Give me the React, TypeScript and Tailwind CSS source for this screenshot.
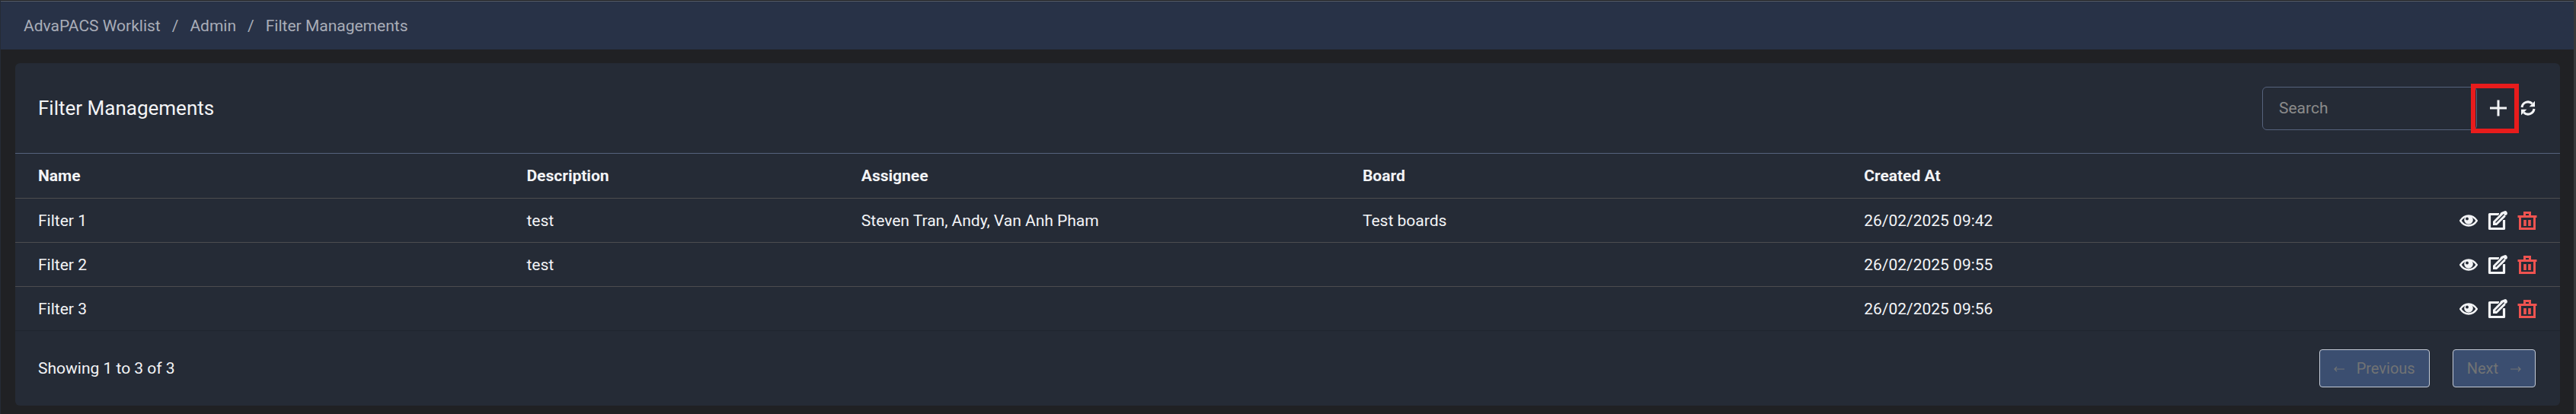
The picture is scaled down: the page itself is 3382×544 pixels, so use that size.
import { useState } from 'react'

type Filter = {
  id: number
  name: string
  description: string
  assignee: string
  board: string
  createdAt: string
}

const filters: Filter[] = [
  { id: 1, name: 'Filter 1', description: 'test', assignee: 'Steven Tran, Andy, Van Anh Pham', board: 'Test boards', createdAt: '26/02/2025 09:42' },
  { id: 2, name: 'Filter 2', description: 'test', assignee: '', board: '', createdAt: '26/02/2025 09:55' },
  { id: 3, name: 'Filter 3', description: '', assignee: '', board: '', createdAt: '26/02/2025 09:56' },
]

function PlusIcon() {
  return (
    <svg viewBox="0 0 24 24" className="size-6" stroke="currentColor" strokeWidth="3" fill="none">
      <path d="M12 1.500v21M1 12h22" />
    </svg>
  )
}

function RefreshIcon() {
  return (
    <svg viewBox="0 0 20 20" className="size-5" fill="none">
      <path d="M2 9A8 8 0 0 1 15.500 4.200M18 11A8 8 0 0 1 4.500 15.800" stroke="currentColor" strokeWidth="3" />
      <path d="M19 .8v7.400h-7.400zM1 19.200v-7.400h7.400z" fill="currentColor" />
    </svg>
  )
}

function EyeIcon() {
  return (
    <svg viewBox="0 0 24 24" className="size-6" fill="none">
      <path d="M1.200 12Q5.500 5.500 12 5.500T22.800 12Q18.500 18.500 12 18.500T1.200 12Z" stroke="currentColor" strokeWidth="2.400" />
      <circle cx="12" cy="11" r="5.800" fill="currentColor" />
      <circle cx="10" cy="9.500" r="1.900" className="fill-[#252b36]" />
    </svg>
  )
}

function EditIcon() {
  return (
    <svg viewBox="0 0 26 26" className="size-[26px]" fill="none" stroke="currentColor">
      <path d="M15 4.500H2.500v19H21.500V12" strokeWidth="3.200" strokeLinejoin="round" />
      <path d="M9 17L23 3" className="stroke-[#252b36]" strokeWidth="9" />
      <path d="M7 19v-5L18.500 2.300l5.200 5.200L12 19z" fill="currentColor" stroke="none" />
      <path d="M19.500 4.500L22.800 3.200" strokeWidth="6" strokeLinecap="round" />
      <path d="M10.500 15.500L21.500 4.500" className="stroke-[#252b36]" strokeWidth="1.500" />
    </svg>
  )
}

function TrashIcon() {
  return (
    <svg viewBox="0 0 26 26" className="size-[26px]" fill="none" stroke="currentColor">
      <path d="M.5 7.500h25" strokeWidth="3" />
      <path d="M9.500 7V2.500h7V7M3.500 7v16.500h19V7" strokeWidth="3" />
      <path d="M10 12v8M16 12v8" strokeWidth="3.600" />
    </svg>
  )
}

function Arrow({ direction }: { direction: 'left' | 'right' }) {
  return (
    <svg viewBox="0 0 14 8" className="mt-0.5 h-2 w-3.5" fill="none" stroke="currentColor" strokeWidth="1.200">
      <path d={direction === 'left' ? 'M14 4H1M4 1L1 4l3 3' : 'M0 4h13M10 1l3 3-3 3'} />
    </svg>
  )
}

export default function App() {
  const [search, setSearch] = useState('')

  return (
    <div className="min-h-screen border-l border-r-[3px] border-l-[#252b36] border-r-[#38393b] bg-[#202124] pb-[11px] pt-px font-[Roboto,sans-serif] text-[21px] leading-8 text-[#f3f4f6]">
      <nav aria-label="Breadcrumb" className="flex h-16 items-center border-t border-[#5a5f69] bg-[#283247] px-[30px] text-[#a9adb8]">
        <a href="#worklist">AdvaPACS Worklist</a>
        <span className="px-[15px]">/</span>
        <a href="#admin">Admin</a>
        <span className="px-[15px]">/</span>
        <span>Filter Managements</span>
      </nav>

      <main className="ml-[19px] mr-[18px] mt-[18px] rounded-md bg-[#252b36]">
        <header className="flex h-[118px] items-center justify-between pl-[30px] pr-8">
          <h1 className="text-[26px]">Filter Managements</h1>
          <div className="flex items-center">
            <input
              type="text"
              aria-label="Search"
              placeholder="Search"
              value={search}
              onChange={(e) => setSearch(e.target.value)}
              className="-mr-2 h-[57px] w-[282px] rounded-md border border-[#56627c] px-[21px] outline-none placeholder:text-[#8b8b8b]"
            />
            <button aria-label="Add filter" className="flex h-[65px] w-[63px] items-center justify-center border-[6px] border-[#e81c1c] pl-2">
              <PlusIcon />
            </button>
            <button aria-label="Refresh" className="ml-0.5">
              <RefreshIcon />
            </button>
          </div>
        </header>

        <table className="w-full table-fixed border-collapse text-left">
          <thead>
            <tr className="h-[59px] border-b border-t border-b-[#4c4c4f] border-t-[#56627c]">
              <th className="w-[19.2%] pl-[30px]">Name</th>
              <th className="w-[13.15%] pl-[30px]">Description</th>
              <th className="w-[19.7%] pl-[30px]">Assignee</th>
              <th className="w-[19.7%] pl-[30px]">Board</th>
              <th className="pl-[30px]">Created At</th>
              <th className="w-[180px]" aria-label="Actions" />
            </tr>
          </thead>
          <tbody>
            {filters.map((filter) => (
              <tr key={filter.id} className="h-[58px] border-b border-[#4c4c4f] last:border-[#20252f]">
                <td className="pl-[30px]">{filter.name}</td>
                <td className="pl-[30px]">{filter.description}</td>
                <td className="pl-[30px]">{filter.assignee}</td>
                <td className="pl-[30px]">{filter.board}</td>
                <td className="pl-[30px]">{filter.createdAt}</td>
                <td className="pr-[30px]">
                  <div className="flex items-center justify-end gap-[13px]">
                    <button aria-label={'View ' + filter.name}><EyeIcon /></button>
                    <button aria-label={'Edit ' + filter.name}><EditIcon /></button>
                    <button aria-label={'Delete ' + filter.name} className="text-[#ef5350]"><TrashIcon /></button>
                  </div>
                </td>
              </tr>
            ))}
          </tbody>
        </table>

        <footer className="flex h-[98px] items-center justify-between pl-[30px] pr-8">
          <p>Showing 1 to 3 of 3</p>
          <div className="flex gap-[30px] text-xl text-[#717374]">
            <button disabled className="flex h-[50px] items-center gap-4 rounded border border-[#c3cad6] bg-[#3b4e70] px-[18px]">
              <Arrow direction="left" />
              Previous
            </button>
            <button disabled className="flex h-[50px] items-center gap-4 rounded border border-[#c3cad6] bg-[#3b4e70] px-[18px]">
              Next
              <Arrow direction="right" />
            </button>
          </div>
        </footer>
      </main>
    </div>
  )
}
